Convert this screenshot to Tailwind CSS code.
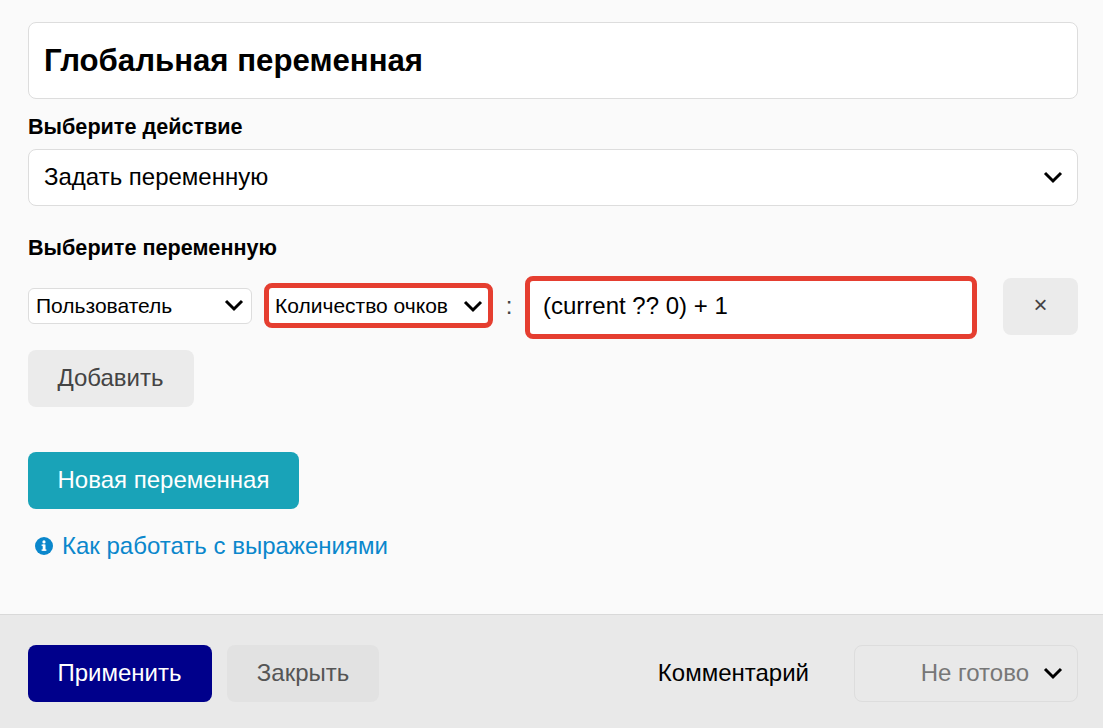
<!DOCTYPE html>
<html lang="ru">

<head>
  <meta charset="UTF-8">
  <title>Глобальная переменная</title>
  <script src="https://cdn.jsdelivr.net/npm/@tailwindcss/browser@4"></script>
</head>

<body class="bg-[#fafafa] font-['Liberation_Sans',Arial,sans-serif] text-black">
  <div class="flex h-[728px] w-[1103px] flex-col overflow-hidden">

    <!-- form -->
    <div class="h-[614px] pt-[22px] pr-[25px] pl-[28px]">
      <div class="flex h-[77px] w-[1050px] items-center rounded-lg border border-[#dddddd] bg-white pt-[2px] pl-[15px] text-[31.2px] font-bold">Глобальная переменная</div>

      <div class="mt-[14px] text-[21.6px] leading-[27px] font-bold">Выберите действие</div>
      <div class="relative mt-[9px] h-[57px] w-[1050px]">
        <select class="h-full w-full appearance-none rounded-lg border border-[#dddddd] bg-white pb-[2px] pl-[15px] text-[24px] outline-none">
          <option>Задать переменную</option>
        </select>
        <svg class="pointer-events-none absolute top-[20px] right-[15px] h-[16px] w-[20px]" viewBox="0 0 20 16" fill="none" stroke="black" stroke-width="3"><path d="M2 4l8 8 8-8"/></svg>
      </div>

      <div class="mt-[28px] text-[21.6px] leading-[27px] font-bold">Выберите переменную</div>

      <div class="mt-[15px] flex h-[63px] items-start">
        <div class="relative mt-[12px] h-[36px] w-[224px]">
          <select class="h-full w-full appearance-none rounded-md border border-[#dddddd] bg-white pl-[7px] text-[21px] outline-none">
            <option>Пользователь</option>
          </select>
          <svg class="pointer-events-none absolute top-[9px] right-[8px] h-[16px] w-[20px]" viewBox="0 0 20 16" fill="none" stroke="black" stroke-width="3"><path d="M2 4l8 8 8-8"/></svg>
        </div>
        <div class="relative mt-[7px] ml-[12px] h-[45px] w-[229px]">
          <select class="h-full w-full appearance-none rounded-lg border-[5px] border-[#e53e30] bg-white pl-[6px] text-[21px] outline-none">
            <option>Количество очков</option>
          </select>
          <svg class="pointer-events-none absolute top-[15px] right-[10px] h-[16px] w-[20px]" viewBox="0 0 20 16" fill="none" stroke="black" stroke-width="3"><path d="M2 4l8 8 8-8"/></svg>
        </div>
        <span class="w-[32px] text-center text-[24px] leading-[60px] text-[#444444]">:</span>
        <input class="h-[63px] w-[452px] rounded-lg border-[5px] border-[#e53e30] bg-white pb-[3px] pl-[13px] text-[24px] outline-none" value="(current ?? 0) + 1">
        <button class="mt-[2px] ml-[26px] flex h-[57px] w-[75px] items-center justify-center rounded-lg bg-[#ebebeb] pb-[3px] text-[24px] text-[#444444]">×</button>
      </div>

      <button class="mt-[11px] block h-[57px] w-[166px] rounded-lg bg-[#ebebeb] pr-[1px] pb-[2px] text-[24px] text-[#444444]">Добавить</button>

      <button class="mt-[45px] block h-[57px] w-[271px] rounded-lg bg-[#19a3b8] pb-[2px] text-[24px] text-white">Новая переменная</button>

      <a class="mt-[24px] ml-[7px] flex items-center gap-[9px] text-[24px] leading-[26px] text-[#0a87cc]">
        <svg class="h-[18px] w-[18px]" viewBox="0 0 18 18"><circle cx="9" cy="9" r="9" fill="#0a87cc"/><rect x="7.7" y="7.5" width="2.8" height="6" fill="white"/><rect x="6.6" y="7.5" width="3" height="1.4" fill="white"/><rect x="6.6" y="12.4" width="4.8" height="1.4" fill="white"/><circle cx="9" cy="4.9" r="1.6" fill="white"/></svg>
        Как работать с выражениями
      </a>
    </div>

    <!-- footer -->
    <div class="flex flex-1 items-start border-t border-[#d9d9d9] bg-[#e9e9e9] pt-[30px] pr-[25px] pl-[28px]">
      <button class="h-[57px] w-[184px] rounded-lg bg-[#00008b] pr-[1px] pb-[2px] text-[24px] text-white">Применить</button>
      <button class="ml-[15px] h-[57px] w-[152px] rounded-lg bg-[#e2e2e2] pb-[2px] text-[24px] text-[#555555]">Закрыть</button>
      <span class="ml-auto text-[24px] leading-[55px]">Комментарий</span>
      <div class="relative ml-[45px] h-[57px] w-[224px]">
        <select disabled class="h-full w-full appearance-none rounded-lg border border-[#dddddd] bg-transparent pr-[48px] pb-[2px] text-right text-[24px] text-[#777777] outline-none">
          <option>Не готово</option>
        </select>
        <svg class="pointer-events-none absolute top-[20px] right-[15px] h-[16px] w-[20px]" viewBox="0 0 20 16" fill="none" stroke="black" stroke-width="3"><path d="M2 4l8 8 8-8"/></svg>
      </div>
    </div>
  </div>
</body>

</html>
